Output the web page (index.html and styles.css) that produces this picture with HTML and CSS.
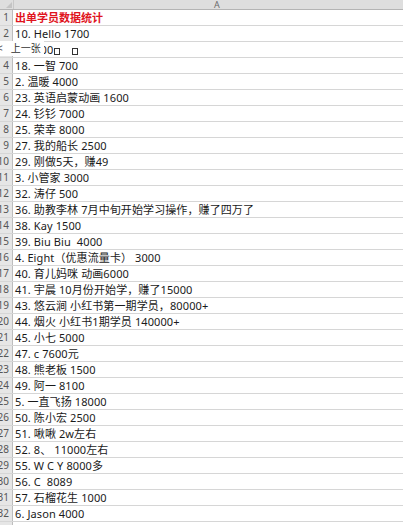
FILE: index.html
```html
<!DOCTYPE html>
<html lang="zh">
<head>
<meta charset="utf-8">
<title>出单学员数据统计</title>
<link rel="stylesheet" href="styles.css">
</head>
<body>
<div class="sheet">
  <div class="colhead"><div class="corner"><span class="tri"></span></div><div class="cola">A</div></div>
  <div class="row"><div class="rn">1</div><div class="cell title">出单学员数据统计</div></div>
  <div class="row"><div class="rn">2</div><div class="cell">10. Hello 1700</div></div>
  <div class="row"><div class="rn">3</div><div class="cell hidden-start">11. 1000<span class="tofu"></span><span class="tofu second"></span></div></div>
  <div class="row"><div class="rn">4</div><div class="cell">18. 一智 700</div></div>
  <div class="row"><div class="rn">5</div><div class="cell">2. 温暖 4000</div></div>
  <div class="row"><div class="rn">6</div><div class="cell">23. 英语启蒙动画 1600</div></div>
  <div class="row"><div class="rn">7</div><div class="cell">24. 钐钐 7000</div></div>
  <div class="row"><div class="rn">8</div><div class="cell">25. 荣幸 8000</div></div>
  <div class="row"><div class="rn">9</div><div class="cell">27. 我的船长 2500</div></div>
  <div class="row"><div class="rn">10</div><div class="cell">29. 刚做5天，赚49</div></div>
  <div class="row"><div class="rn">11</div><div class="cell">3. 小管家 3000</div></div>
  <div class="row"><div class="rn">12</div><div class="cell">32. 涛仔 500</div></div>
  <div class="row"><div class="rn">13</div><div class="cell">36. 助教李林 7月中旬开始学习操作，赚了四万了</div></div>
  <div class="row"><div class="rn">14</div><div class="cell">38. Kay 1500</div></div>
  <div class="row"><div class="rn">15</div><div class="cell">39. Biu Biu  4000</div></div>
  <div class="row"><div class="rn">16</div><div class="cell">4. Eight（优惠流量卡） 3000</div></div>
  <div class="row"><div class="rn">17</div><div class="cell">40. 育儿妈咪 动画6000</div></div>
  <div class="row"><div class="rn">18</div><div class="cell">41. 宇晨 10月份开始学，赚了15000</div></div>
  <div class="row"><div class="rn">19</div><div class="cell">43. 悠云涧 小红书第一期学员，80000+</div></div>
  <div class="row"><div class="rn">20</div><div class="cell">44. 烟火 小红书1期学员 140000+</div></div>
  <div class="row"><div class="rn">21</div><div class="cell">45. 小七 5000</div></div>
  <div class="row"><div class="rn">22</div><div class="cell">47. c 7600元</div></div>
  <div class="row"><div class="rn">23</div><div class="cell">48. 熊老板 1500</div></div>
  <div class="row"><div class="rn">24</div><div class="cell">49. 阿一 8100</div></div>
  <div class="row"><div class="rn">25</div><div class="cell">5. 一直飞扬 18000</div></div>
  <div class="row"><div class="rn">26</div><div class="cell">50. 陈小宏 2500</div></div>
  <div class="row"><div class="rn">27</div><div class="cell">51. 啾啾 2w左右</div></div>
  <div class="row"><div class="rn">28</div><div class="cell">52. 8、 11000左右</div></div>
  <div class="row"><div class="rn">29</div><div class="cell">55. W C Y 8000多</div></div>
  <div class="row"><div class="rn">30</div><div class="cell">56. C  8089</div></div>
  <div class="row"><div class="rn">31</div><div class="cell">57. 石榴花生 1000</div></div>
  <div class="row"><div class="rn">32</div><div class="cell">6. Jason 4000</div></div>
  <div class="row"><div class="rn">33</div><div class="cell"></div></div>
  <div class="prev"><span class="chev">&lt;</span><span class="prev-label">上一张</span></div>
</div>
</body>
</html>
```
FILE: styles.css
```css
html, body {
  margin: 0;
  padding: 0;
  background: #ffffff;
  overflow: hidden;
}
.sheet {
  position: relative;
  width: 403px;
  height: 525px;
  overflow: hidden;
  font-family: "Noto Sans", "Noto Sans CJK SC", sans-serif;
  font-size: 11px;
  color: #1a1a1a;
}
.colhead {
  display: flex;
  height: 9px;
  background: #dedede;
  border-bottom: 1px solid #b4b4b4;
}
.corner {
  width: 13px;
  flex: none;
  border-right: 1px solid #c8c8c8;
  position: relative;
}
.tri {
  position: absolute;
  right: 1px;
  bottom: 1px;
  width: 0;
  height: 0;
  border-left: 6px solid transparent;
  border-bottom: 6px solid #c4c4c4;
}
.cola {
  flex: none;
  width: 406px;
  text-align: center;
  font-size: 9px;
  line-height: 9px;
  color: #6a6a6a;
}
.row {
  display: flex;
  height: 15px;
  border-bottom: 1px solid #d6d6d6;
}
.rn {
  flex: none;
  width: 13px;
  box-sizing: border-box;
  padding-right: 3px;
  background: #e6e6e6;
  border-right: 1px solid #bdbdbd;
  color: #555555;
  font-size: 10px;
  line-height: 15px;
  text-align: right;
  overflow: hidden;
  white-space: nowrap;
  direction: rtl;
}
.cell {
  flex: 1;
  padding-left: 2px;
  line-height: 15px;
  white-space: pre;
  overflow: hidden;
  letter-spacing: 0.1px;
}
.title {
  color: #e0141e;
  font-weight: bold;
  letter-spacing: 0;
}
.hidden-start {
  padding-left: 0;
  margin-left: -4px;
}
.tofu {
  display: inline-block;
  box-sizing: border-box;
  width: 6px;
  height: 7px;
  margin-left: 1px;
  border: 1px solid #333333;
  vertical-align: -1px;
}
.tofu.second {
  margin-left: 12px;
}
.prev {
  position: absolute;
  left: 0;
  top: 41px;
  width: 44px;
  height: 15px;
  background: #ffffff;
  color: #333333;
  font-size: 10px;
  line-height: 15px;
  display: flex;
  white-space: nowrap;
  overflow: hidden;
}
.chev {
  flex: none;
  margin-left: -3px;
  color: #555555;
}
.prev-label {
  flex: none;
  margin-left: 8px;
  font-size: 10px;
}
```
